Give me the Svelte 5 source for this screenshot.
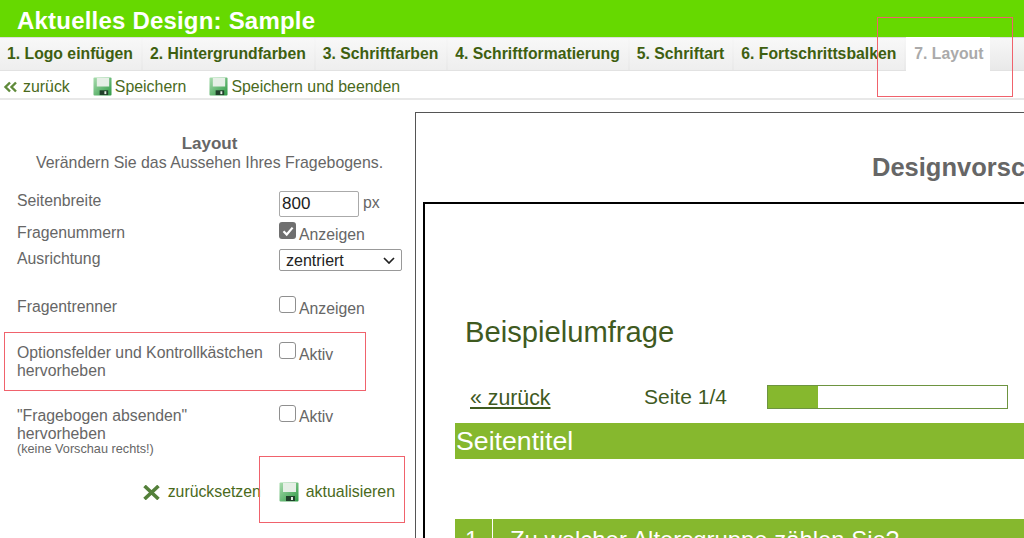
<script lang="ts">
  const tabs = [
    '1. Logo einfügen',
    '2. Hintergrundfarben',
    '3. Schriftfarben',
    '4. Schriftformatierung',
    '5. Schriftart',
    '6. Fortschrittsbalken',
    '7. Layout'
  ]
  const activeTab = 6
  let width = $state('800')
  let align = $state('zentriert')
  const progress = 21
</script>

{#snippet floppy(size: number)}
  <svg class="floppy" width={size} height={size} viewBox="0 0 20 20" aria-hidden="true">
    <defs>
      <linearGradient id="fl" x1="0" y1="0" x2="1" y2="1">
        <stop offset="0" stop-color="#a9dcae" />
        <stop offset="1" stop-color="#2f9a45" />
      </linearGradient>
    </defs>
    <rect x="0.5" y="0.5" width="19" height="19" rx="1" fill="url(#fl)" />
    <rect x="4" y="1" width="13" height="9" fill="#e6efe6" />
    <rect x="7" y="14" width="9" height="5" fill="#20402a" />
    <rect x="12" y="15" width="2" height="3" fill="#e6efe6" />
  </svg>
{/snippet}

<div class="page">
  <header class="title">Aktuelles Design: Sample</header>

  <nav class="tabs">
    {#each tabs as tab, i}
      <span class="tab" class:active={i === activeTab}>{tab}</span>
    {/each}
  </nav>

  <div class="toolbar">
    <span class="tool back">
      <svg width="15" height="12" viewBox="0 0 15 12" aria-hidden="true">
        <path d="M7 1.5 2.5 6 7 10.5M13 1.5 8.5 6 13 10.5" fill="none" stroke="#5f8a3a" stroke-width="2.4" />
      </svg>
      zurück
    </span>
    <span class="tool">{@render floppy(19)}Speichern</span>
    <span class="tool">{@render floppy(19)}Speichern und beenden</span>
  </div>

  <main class="main">
    <section class="form">
      <h2>Layout</h2>
      <p class="lead">Verändern Sie das Aussehen Ihres Fragebogens.</p>

      <div class="row r-width">
        <span>Seitenbreite</span>
        <span class="ctl"><input class="num" bind:value={width} /> <span class="unit">px</span></span>
      </div>
      <div class="row r-num">
        <span>Fragenummern</span>
        <span class="ctl">
          <span class="box checked">
            <svg width="16" height="16" viewBox="0 0 16 16" aria-hidden="true">
              <path d="M3.5 8.2 6.7 11.5 12.6 4.6" fill="none" stroke="#fff" stroke-width="2.2" />
            </svg>
          </span>Anzeigen
        </span>
      </div>
      <div class="row r-align">
        <span>Ausrichtung</span>
        <span class="ctl">
          <span class="select">
            {align}
            <svg width="12" height="7" viewBox="0 0 12 7" aria-hidden="true">
              <path d="M1 1 6 6 11 1" fill="none" stroke="#222" stroke-width="1.7" />
            </svg>
          </span>
        </span>
      </div>
      <div class="row r-sep">
        <span>Fragentrenner</span>
        <span class="ctl"><span class="box"></span>Anzeigen</span>
      </div>
      <div class="row r-opt">
        <span>Optionsfelder und Kontrollkästchen hervorheben</span>
        <span class="ctl"><span class="box"></span>Aktiv</span>
      </div>
      <div class="row r-send">
        <span>"Fragebogen absenden" hervorheben<small>(keine Vorschau rechts!)</small></span>
        <span class="ctl"><span class="box"></span>Aktiv</span>
      </div>

      <div class="actions">
        <span class="action reset">
          <svg width="17" height="15" viewBox="0 0 17 15" aria-hidden="true">
            <path d="M1.5 1 15.5 14M15.5 1 1.5 14" fill="none" stroke="#54803a" stroke-width="3.6" />
          </svg>
          zurücksetzen
        </span>
        <span class="action save">{@render floppy(20)}aktualisieren</span>
      </div>
    </section>

    <section class="preview">
      <h1>Designvorschau</h1>
      <div class="sheet">
        <div class="survey-title">Beispielumfrage</div>
        <div class="pager">
          <span class="pback">« zurück</span>
          <span class="pnum">Seite 1/4</span>
          <span class="bar"><span class="fill" style:width="{progress}%"></span></span>
        </div>
        <div class="band">Seitentitel</div>
        <div class="question">
          <span class="qn">1</span>
          <span class="qt">Zu welcher Altersgruppe zählen Sie?</span>
        </div>
      </div>
    </section>
  </main>

  <i class="mark m1"></i>
  <i class="mark m2"></i>
  <i class="mark m3"></i>
</div>

<style>
  :global(body) {
    margin: 0;
  }
  .page {
    position: relative;
    width: 1024px;
    height: 538px;
    overflow: hidden;
    background: #fff;
    font-family: "Liberation Sans", Arial, sans-serif;
    color: #666;
  }
  .title {
    height: 37px;
    padding-left: 17px;
    background: #66d900;
    color: #fff;
    font-size: 24px;
    font-weight: bold;
    line-height: 41px;
    letter-spacing: 0.2px;
  }
  .tabs {
    display: flex;
    height: 32px;
    border-top: 1px solid #ddd;
    border-bottom: 1px solid #e2e2e2;
    background: linear-gradient(#f7f7f7, #e9e9e9);
  }
  .tab {
    padding: 0 8px 0 7px;
    margin-right: 2px;
    background: linear-gradient(#f8f8f8, #eeeeee);
    color: #3e5f10;
    font-size: 15.75px;
    font-weight: bold;
    line-height: 32px;
    white-space: nowrap;
  }
  .tab.active {
    margin: -1px 0 -1px 0;
    padding: 1px 7px 0 8px;
    background: #fff;
    color: #aaa;
  }
  .toolbar {
    display: flex;
    align-items: center;
    gap: 23px;
    box-sizing: border-box;
    height: 27px;
    padding: 4px 0 0 3px;
    box-shadow: 0 2px 0 #e8e8e8;
    margin-bottom: 2px;
  }
  .tool {
    display: inline-flex;
    align-items: center;
    gap: 3px;
    color: #4a6a1c;
    font-size: 15.9px;
  }
  .tool.back {
    gap: 5px;
  }
  .floppy {
    flex: none;
  }
  .main {
    display: flex;
    height: 438px;
  }
  .form {
    flex: none;
    width: 415px;
    box-sizing: border-box;
    padding: 0 20px 0 17px;
    font-size: 15.8px;
  }
  h2 {
    margin: 35px 0 0;
    font-size: 17px;
    line-height: 18px;
    text-align: center;
    color: #666;
    transform: translateX(3.5px);
  }
  .lead {
    margin: 0 -7px 0 0;
    font-size: 15.9px;
    line-height: 19px;
    text-align: center;
    white-space: nowrap;
  }
  .row {
    display: grid;
    grid-template-columns: 262px 1fr;
    line-height: 18px;
  }
  .ctl {
    display: flex;
    align-items: flex-start;
    white-space: nowrap;
  }
  .r-width {
    margin-top: 20px;
    height: 32px;
  }
  .r-num {
    height: 26px;
  }
  .r-align {
    height: 48px;
  }
  .r-sep {
    height: 46px;
  }
  .r-opt {
    height: 63px;
  }
  .r-send {
    height: 75px;
  }
  .num {
    box-sizing: border-box;
    width: 80px;
    height: 26px;
    margin: -1px 0 0;
    padding: 0 2px;
    border: 1px solid #aaa;
    border-radius: 2px;
    font: 17px "Liberation Sans", Arial, sans-serif;
    color: #222;
  }
  .unit {
    margin: 2px 0 0 4px;
  }
  .box {
    display: inline-block;
    flex: none;
    box-sizing: border-box;
    width: 17px;
    height: 17px;
    margin: -2px 3px 0 0;
    border: 1px solid #8f8f8f;
    border-radius: 3px;
    background: #fff;
  }
  .box.checked {
    border: 0;
    background: #6f6f6f;
  }
  .box svg {
    display: block;
    margin: 0.5px;
  }
  .ctl:has(.box) {
    line-height: 22px;
  }
  .r-send .ctl:has(.box) {
    line-height: 20px;
  }
  .select {
    display: flex;
    align-items: center;
    justify-content: space-between;
    box-sizing: border-box;
    width: 123px;
    height: 22px;
    padding: 2px 6px 0 6px;
    border: 1px solid #999;
    border-radius: 2px;
    font-size: 16px;
    color: #222;
    margin-top: -1px;
  }
  .select svg {
    margin-top: -2px;
  }
  small {
    display: block;
    font-size: 12.7px;
    line-height: 14px;
    margin-top: -1px;
  }
  .actions {
    display: flex;
    justify-content: flex-end;
    gap: 18px;
    margin-top: 0;
  }
  .action {
    display: inline-flex;
    align-items: center;
    gap: 9px;
    color: #4a6a1c;
    font-size: 15.9px;
    line-height: 20px;
  }
  .action.reset {
    gap: 8px;
    font-size: 15.8px;
  }
  .action.save {
    gap: 7px;
  }
  .preview {
    flex: 1;
    min-width: 0;
    overflow: hidden;
    margin-top: 12px;
    border-top: 1px solid #555;
    border-left: 1px solid #555;
  }
  .preview h1 {
    margin: 40px 0 0;
    padding-left: 456px;
    font-size: 25.5px;
    line-height: 28px;
    white-space: nowrap;
    color: #666;
  }
  .sheet {
    width: 900px;
    height: 400px;
    margin: 21px 0 0 7px;
    padding: 0 0 0 30px;
    border: 2px solid #000;
    border-width: 2px 2px 0 2px;
    color: #3f5a1f;
  }
  .survey-title {
    margin: 111px 0 0 10px;
    font-size: 29.2px;
    line-height: 34px;
  }
  .pager {
    display: flex;
    align-items: center;
    height: 30px;
    margin-top: 33px;
    font-size: 21px;
  }
  .pback {
    width: 174px;
    margin-left: 15px;
    padding-top: 2px;
    text-decoration: underline;
    font-size: 21.3px;
    flex: none;
  }
  .pnum {
    width: 123px;
    flex: none;
  }
  .bar {
    display: block;
    flex: none;
    box-sizing: border-box;
    width: 241px;
    height: 24px;
    border: 1px solid #6d9440;
    background: #fff;
  }
  .fill {
    display: block;
    height: 100%;
    background: #86b82e;
  }
  .band {
    height: 36px;
    margin-top: 11px;
    padding-left: 1px;
    background: #86b82e;
    color: #fff;
    font-size: 26.7px;
    line-height: 36px;
  }
  .question {
    display: flex;
    height: 60px;
    margin-top: 60px;
    background: #86b82e;
    color: #fff;
    font-size: 23.9px;
    line-height: 41px;
  }
  .qn {
    width: 38px;
    box-sizing: border-box;
    padding-left: 10px;
    border-right: 1px solid #fff;
  }
  .qt {
    padding-left: 17px;
  }
  .mark {
    position: absolute;
    box-sizing: border-box;
    border: 1px solid #f0626c;
  }
  .m1 {
    left: 877px;
    top: 17px;
    width: 136px;
    height: 80px;
  }
  .m2 {
    left: 4px;
    top: 332px;
    width: 362px;
    height: 59px;
  }
  .m3 {
    left: 259px;
    top: 456px;
    width: 146px;
    height: 67px;
  }
</style>
